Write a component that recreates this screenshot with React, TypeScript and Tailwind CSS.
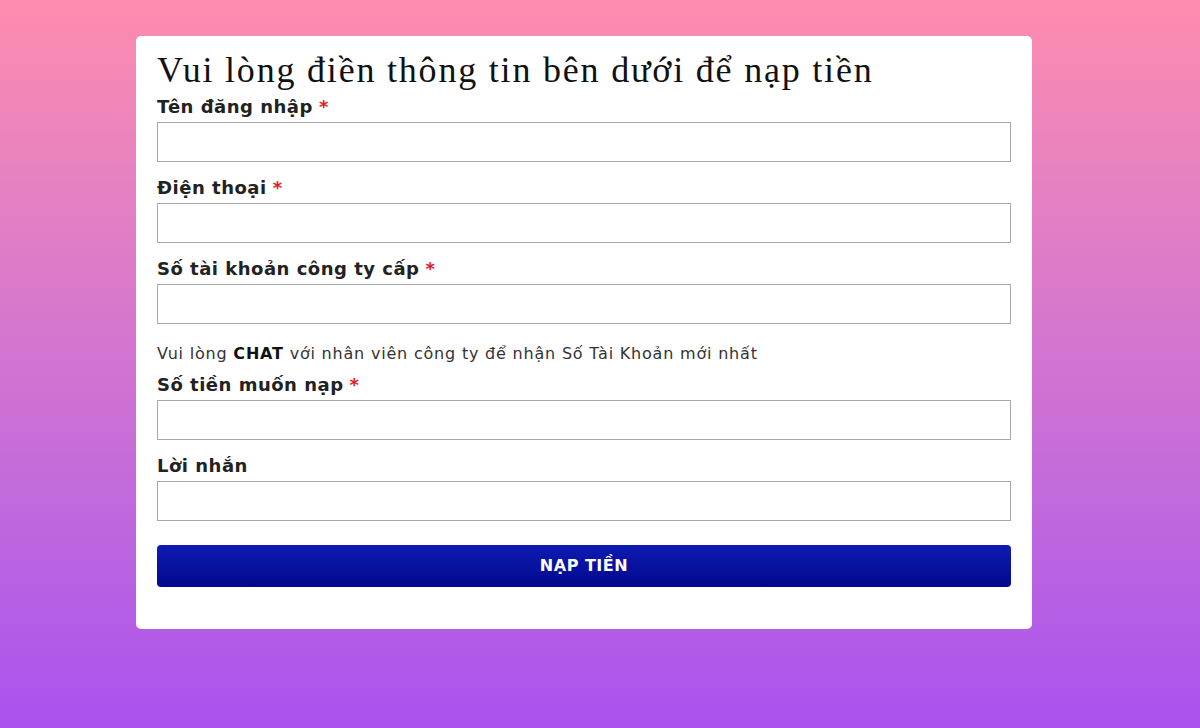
export default function App() {
  const fields = [
    { label: "Tên đăng nhập", required: true },
    { label: "Điện thoại", required: true },
    { label: "Số tài khoản công ty cấp", required: true, note: true },
    { label: "Số tiền muốn nạp", required: true },
    { label: "Lời nhắn", required: false },
  ];

  return (
    <div className="min-h-[728px] w-full bg-gradient-to-b from-[#fd8cae] to-[#a951ee] pt-[36px] font-['DejaVu_Sans',Verdana,sans-serif]">
      <div className="ml-[136px] w-[896px] rounded-[5px] bg-white px-[21px] pb-[42px] pt-[12px]">
        <h1 className="mb-[4px] font-['Liberation_Serif','Times_New_Roman',serif] text-[36px] leading-[44px] tracking-[1.8px] text-[#111]">
          Vui lòng điền thông tin bên dưới để nạp tiền
        </h1>
        <form className="flex flex-col" onSubmit={(e) => e.preventDefault()}>
          {fields.map((f) => (
            <div key={f.label} className="flex flex-col">
              <label className="text-[18px] font-bold leading-[22px] tracking-[0.5px] text-[#222]">
                {f.label}
                {f.required && <span className="ml-[6px] text-[#e0201c]">*</span>}
              </label>
              <input
                type="text"
                className="mt-[4px] h-[40px] w-full border border-[#a9a9a9] bg-white px-2 text-[16px] outline-none"
              />
              {f.note ? (
                <p className="mb-[10px] mt-[20px] text-[16px] leading-[20px] tracking-[0.8px] text-[#333]">
                  Vui lòng <b className="text-[#111]">CHAT</b> với nhân viên công ty để nhận Số Tài Khoản mới nhất
                </p>
              ) : (
                <div className="h-[15px]" />
              )}
            </div>
          ))}
          <button
            type="submit"
            className="mt-[9px] h-[42px] w-full rounded-[4px] bg-gradient-to-b from-[#0e1cb3] to-[#05078e] text-[16px] font-bold tracking-[0.5px] text-white"
          >
            NẠP TIỀN
          </button>
        </form>
      </div>
    </div>
  );
}
